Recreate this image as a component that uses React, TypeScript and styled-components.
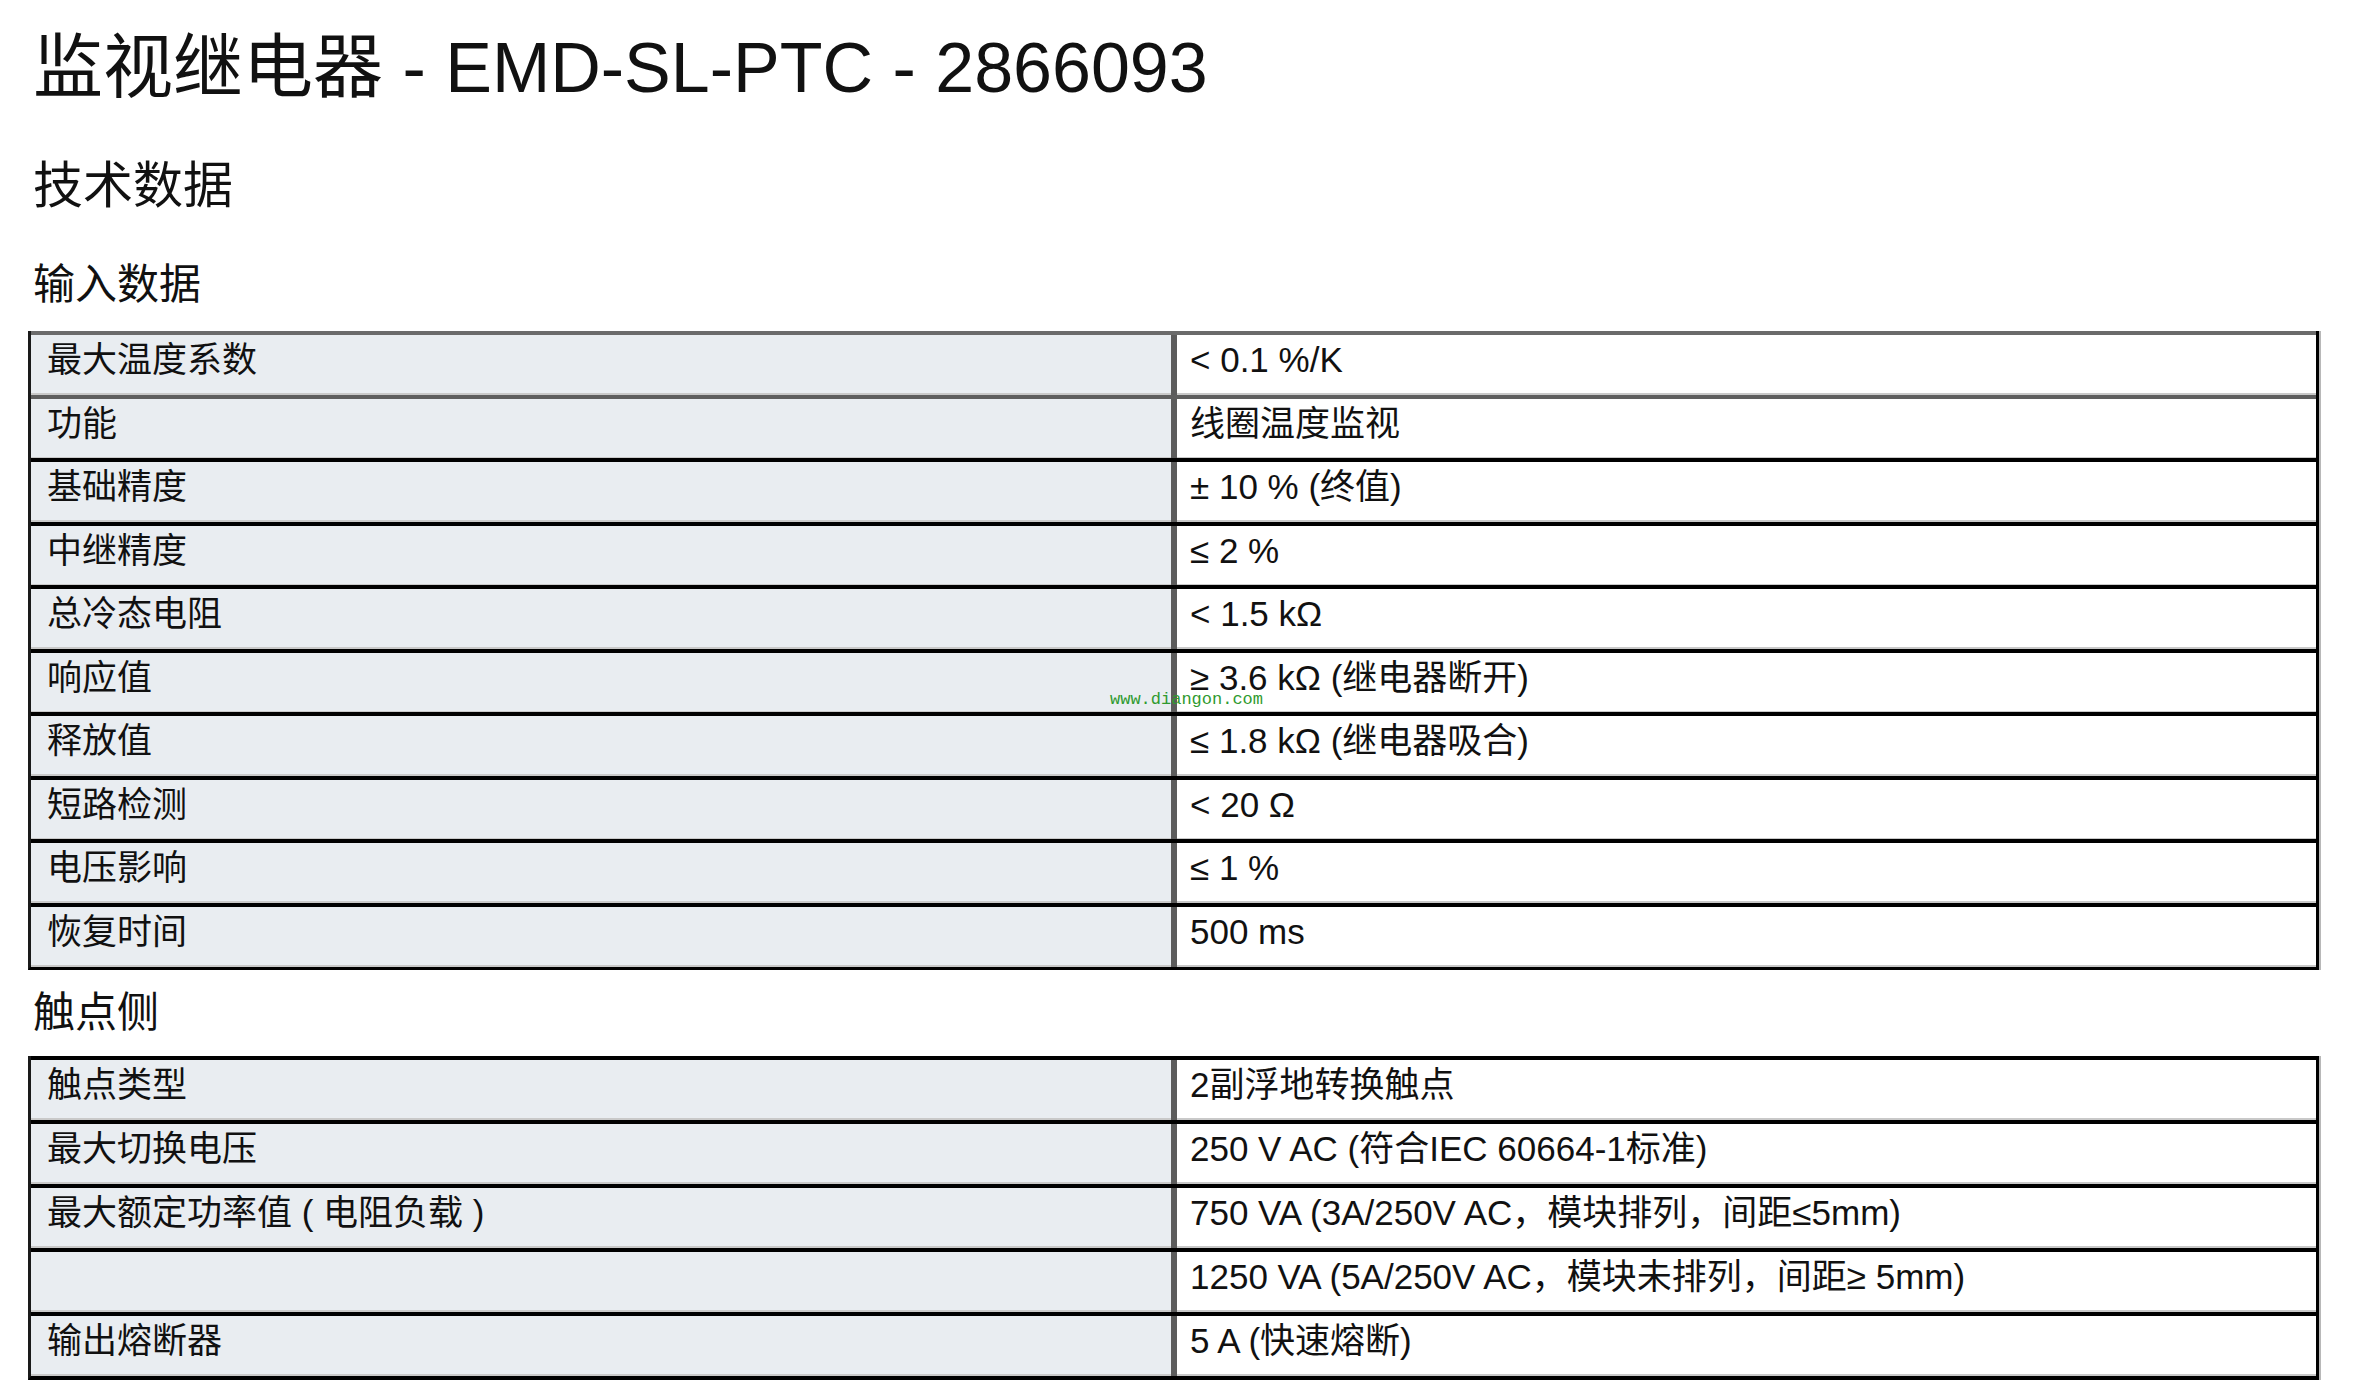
import React from "react";
import styled, { createGlobalStyle } from "styled-components";

const GlobalStyle = createGlobalStyle`
  body {
    margin: 0;
    background: #ffffff;
    color: #111111;
    font-family: "Liberation Sans", "Noto Sans CJK SC", sans-serif;
  }
`;

type Row = { label: string; value: string; line?: string };

const inputRows: Row[] = [
  { label: "最大温度系数", value: "< 0.1 %/K", line: "#6b6b6b" },
  { label: "功能", value: "线圈温度监视", line: "#5e5e5e" },
  { label: "基础精度", value: "± 10 % (终值)" },
  { label: "中继精度", value: "≤ 2 %" },
  { label: "总冷态电阻", value: "< 1.5 kΩ" },
  { label: "响应值", value: "≥ 3.6 kΩ (继电器断开)" },
  { label: "释放值", value: "≤ 1.8 kΩ (继电器吸合)" },
  { label: "短路检测", value: "< 20 Ω" },
  { label: "电压影响", value: "≤ 1 %" },
  { label: "恢复时间", value: "500 ms" },
];

const contactRows: Row[] = [
  { label: "触点类型", value: "2副浮地转换触点" },
  { label: "最大切换电压", value: "250 V AC (符合IEC 60664-1标准)" },
  { label: "最大额定功率值 ( 电阻负载 )", value: "750 VA (3A/250V AC，模块排列，间距≤5mm)" },
  { label: "", value: "1250 VA (5A/250V AC，模块未排列，间距≥ 5mm)" },
  { label: "输出熔断器", value: "5 A (快速熔断)" },
];

const App = () => {
  return (
    <Page>
      <GlobalStyle />
      <Title>监视继电器 - EMD-SL-PTC - 2866093</Title>
      <Heading>技术数据</Heading>
      <SubHeading>输入数据</SubHeading>
      <Table>
        {inputRows.map((r, i) => (
          <TableRow key={i} $line={r.line}>
            <Label>{r.label}</Label>
            <Value>{r.value}</Value>
          </TableRow>
        ))}
        <Watermark>www.diangon.com</Watermark>
      </Table>
      <SectionHeading>触点侧</SectionHeading>
      <Table>
        {contactRows.map((r, i) => (
          <TableRow key={i} $line={r.line} $tall>
            <Label>{r.label}</Label>
            <Value>{r.value}</Value>
          </TableRow>
        ))}
      </Table>
    </Page>
  );
};

export default App;

const Page = styled.div`
  width: 2370px;
  min-height: 1397px;
  padding: 28px 0 0 0;
  box-sizing: border-box;
  display: flex;
  flex-direction: column;
`;

const Title = styled.h1`
  margin: 0 0 0 33px;
  font-size: 70px;
  line-height: 80px;
  font-weight: normal;
  color: #111;
`;

const Heading = styled.h2`
  margin: 48px 0 0 33px;
  font-size: 50px;
  line-height: 60px;
  font-weight: normal;
`;

const SubHeading = styled.h3`
  margin: 44px 0 21px 33px;
  font-size: 42px;
  line-height: 50px;
  font-weight: normal;
`;

const SectionHeading = styled(SubHeading)`
  margin: 18px 0 18px 33px;
`;

const Table = styled.div`
  position: relative;
  margin-left: 28px;
  width: 2291px;
  box-sizing: border-box;
  border-left: 3px solid #1a1a1a;
  border-right: 3px solid #000;
  border-bottom: 4px solid #000;
  box-shadow: 2px 0 0 #b8b8b8;
  display: flex;
  flex-direction: column;
`;

const TableRow = styled.div<{ $line?: string; $tall?: boolean }>`
  display: grid;
  grid-template-columns: 1146px 1fr;
  height: ${(p) => (p.$tall ? "64px" : "63.5px")};
  box-sizing: border-box;
  border-top: 4px solid ${(p) => p.$line || "#000"};
`;

const Cell = styled.div`
  box-sizing: border-box;
  font-size: 35px;
  line-height: 50px;
  padding-bottom: 10px;
  white-space: nowrap;
  box-shadow: inset 0 -2px 0 #c9c9c9;
`;

const Label = styled(Cell)`
  background: #e9edf1;
  padding-left: 16px;
  border-right: 6px solid #5c5c5c;
`;

const Value = styled(Cell)`
  background: #ffffff;
  padding-left: 13px;
`;

const Watermark = styled.span`
  position: absolute;
  left: 1079px;
  top: 360px;
  font-family: "Liberation Mono", "DejaVu Sans Mono", monospace;
  font-size: 17px;
  line-height: 17px;
  color: #2f9a2f;
`;
